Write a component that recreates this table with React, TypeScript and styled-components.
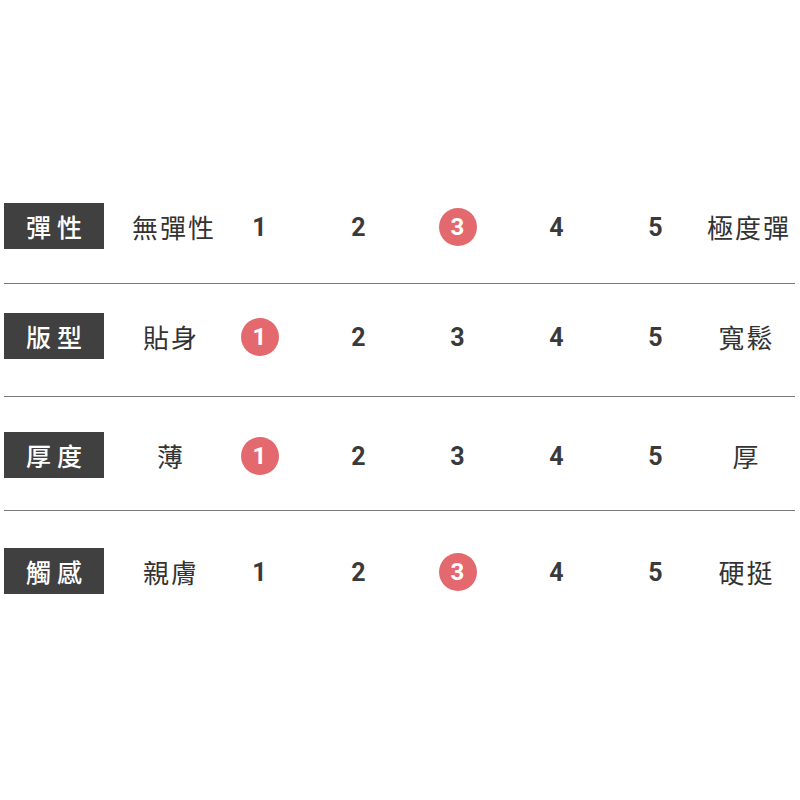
import styled, { createGlobalStyle } from "styled-components";

const GlobalStyle = createGlobalStyle`
    body {
        margin: 0;
        background: #fff;
    }
`;

type Spec = {
    label: string;
    low: string;
    high: string;
    value: number;
    top: number;
    bottom: number;
};

const specs: Spec[] = [
    { label: "彈性", low: "無彈性", high: "極度彈", value: 3, top: 0, bottom: 34 },
    { label: "版型", low: "貼身", high: "寬鬆", value: 1, top: 29, bottom: 37 },
    { label: "厚度", low: "薄", high: "厚", value: 1, top: 35, bottom: 32 },
    { label: "觸感", low: "親膚", high: "硬挺", value: 3, top: 37, bottom: 0 },
];

function App() {
    return <Page>
        <GlobalStyle />
        {specs.map((s, i) => (
            <Section key={s.label} $top={s.top} $bottom={s.bottom} $last={i === specs.length - 1}>
                <Row>
                    <Label>{s.label}</Label>
                    <Desc>{s.low}</Desc>
                    {[1, 2, 3, 4, 5].map(n => (
                        <Cell key={n}>
                            {n === s.value ? <Dot>{n}</Dot> : <Num>{n}</Num>}
                        </Cell>
                    ))}
                    <Desc>{s.high}</Desc>
                </Row>
            </Section>
        ))}
    </Page>;
}

const Page = styled.div`
    width: 791px;
    margin-left: 4px;
    padding-top: 203px;
    font-family: "Noto Sans CJK TC", "Noto Sans", sans-serif;
`;

const Section = styled.div<{ $top: number; $bottom: number; $last: boolean }>`
    padding-top: ${p => p.$top}px;
    padding-bottom: ${p => p.$bottom}px;
    border-bottom: ${p => p.$last ? "none" : "1px solid #7a7a7a"};
`;

const Row = styled.div`
    display: grid;
    grid-template-columns: 126px 80px repeat(5, 99px) 81px;
    align-items: center;
    height: 46px;
`;

const Label = styled.div`
    display: flex;
    align-items: center;
    justify-content: center;

    width: 100px;
    height: 46px;
    padding-left: 6px;
    box-sizing: border-box;

    background: #404040;
    color: #fff;
    font-size: 25px;
    font-weight: 500;
    letter-spacing: 6px;
`;

const Desc = styled.div`
    text-align: center;
    padding-left: 2px;
    color: #333;
    font-size: 26px;
    letter-spacing: 2px;
    white-space: nowrap;
`;

const Cell = styled.div`
    display: flex;
    justify-content: center;
    align-items: center;
    padding-top: 3px;
`;

const Num = styled.span`
    font-family: Roboto, "Noto Sans", sans-serif;
    font-size: 25px;
    font-weight: 700;
    line-height: 1;
    color: #3a3a3a;
`;

const Dot = styled.span`
    display: flex;
    align-items: center;
    justify-content: center;

    width: 38px;
    height: 38px;
    margin-top: -1px;
    border-radius: 50%;

    background: #e4696e;
    color: #fff;
    font-family: Roboto, "Noto Sans", sans-serif;
    font-size: 24px;
    font-weight: 700;
`;

export default App;
